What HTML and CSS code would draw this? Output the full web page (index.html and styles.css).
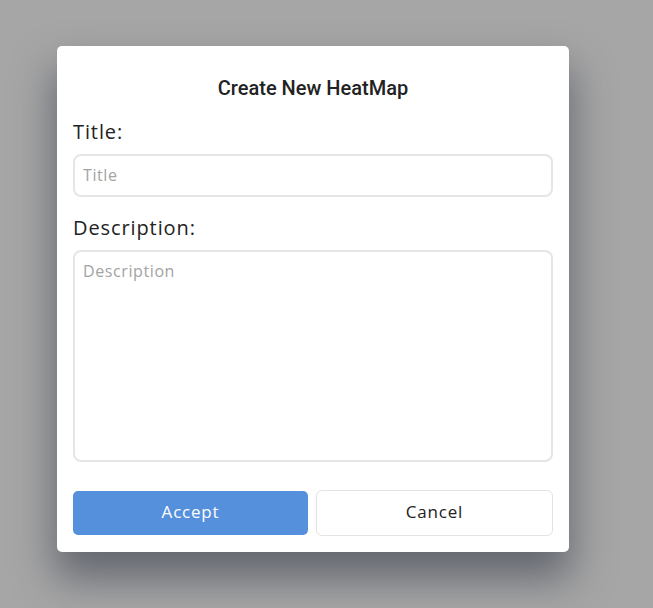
FILE: index.html
```html
<!DOCTYPE html>
<html>
<head>
<meta charset="utf-8">
<link rel="stylesheet" href="styles.css">
</head>
<body>
<div class="overlay">
  <div class="modal">
    <h2 class="modal-title">Create New HeatMap</h2>
    <label class="field-label" for="t">Title:</label>
    <input id="t" class="input" type="text" placeholder="Title">
    <label class="field-label" for="d">Description:</label>
    <textarea id="d" class="textarea" placeholder="Description"></textarea>
    <div class="actions">
      <button class="btn btn-primary">Accept</button>
      <button class="btn btn-secondary">Cancel</button>
    </div>
  </div>
</div>
</body>
</html>
```
FILE: styles.css
```css
html, body {
  margin: 0;
  padding: 0;
  width: 653px;
  height: 608px;
  overflow: hidden;
  background: #a6a6a6;
}
.overlay {
  padding-top: 46px;
  padding-left: 57px;
}
.modal {
  width: 512px;
  box-sizing: border-box;
  background: #fff;
  border-radius: 5px;
  padding: 29px 16px 16px;
  display: flex;
  flex-direction: column;
  box-shadow: 0 24px 40px 2px rgba(55, 60, 75, 0.6);
}
.modal-title {
  margin: 0;
  font-family: Roboto, "Noto Sans", sans-serif;
  font-weight: 500;
  font-size: 20px;
  line-height: 26px;
  color: #222;
  text-align: center;
}
.field-label {
  font-family: "Open Sans", "Noto Sans", sans-serif;
  font-size: 20px;
  letter-spacing: 0.9px;
  line-height: 24px;
  color: #222;
  margin-top: 19px;
  margin-bottom: 10px;
}
.input, .textarea {
  box-sizing: border-box;
  width: 480px;
  border: 2px solid #e5e5e5;
  border-radius: 8px;
  font-family: "Open Sans", "Noto Sans", sans-serif;
  font-size: 16px;
  letter-spacing: 0.6px;
  color: #333;
  padding: 0 8px;
  outline: none;
  margin: 0;
}
.input {
  height: 43px;
  padding-bottom: 2px;
}
.textarea {
  height: 212px;
  padding-top: 8px;
  resize: none;
}
.input::placeholder, .textarea::placeholder {
  color: #a3a3a3;
}
.actions {
  display: flex;
  gap: 8px;
  margin-top: 28px;
  align-items: center;
}
.btn {
  flex: 1;
  font-family: "Open Sans", "Noto Sans", sans-serif;
  font-size: 17px;
  letter-spacing: 0.8px;
  cursor: pointer;
  padding: 0 0 3px;
}
.btn-primary {
  height: 44px;
  background: #5590dc;
  color: #fff;
  border: none;
  border-radius: 5px;
}
.btn-secondary {
  height: 46px;
  background: #fff;
  color: #222;
  border: 1px solid #e3e3e3;
  border-radius: 6px;
}
```
